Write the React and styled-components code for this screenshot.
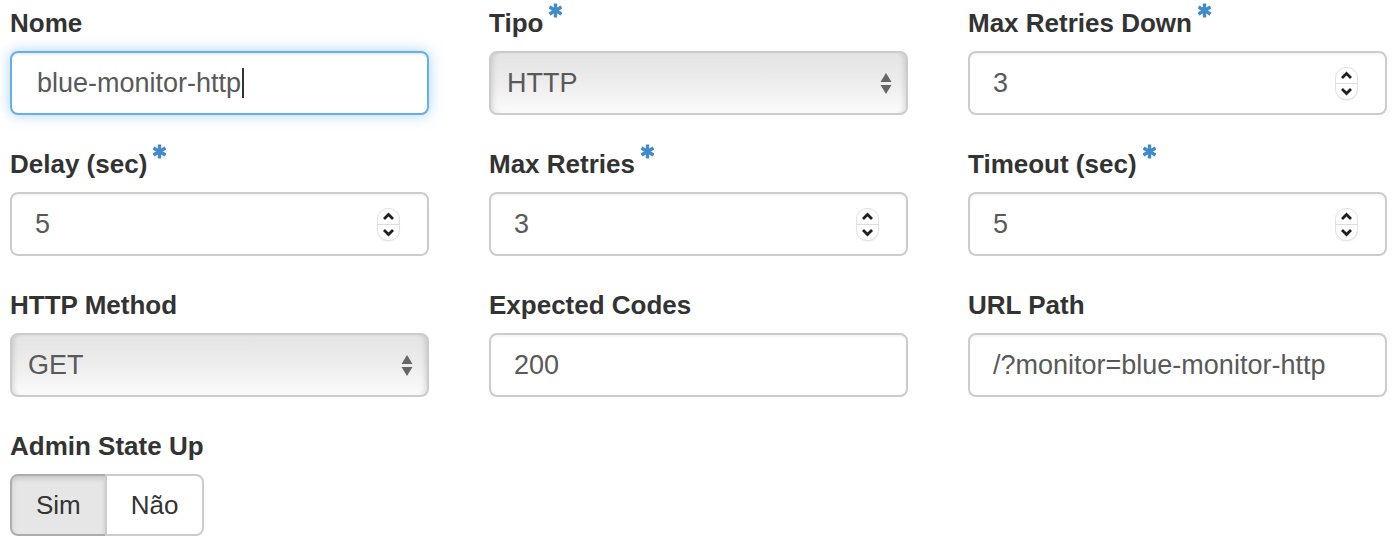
import React from 'react'
import styled, { createGlobalStyle } from 'styled-components'

const GlobalStyle = createGlobalStyle`
  body {
    margin: 0;
    background: #fff;
    font-family: "Liberation Sans", Arial, sans-serif;
  }
`

const Form = styled.div`
  display: grid;
  grid-template-columns: repeat(3, 419px);
  column-gap: 60px;
  row-gap: 31px;
  padding: 5px 6px 0 10px;
`

const Group = styled.div`
  display: flex;
  flex-direction: column;
`

const Label = styled.label`
  display: flex;
  align-items: flex-start;
  height: 36px;
  line-height: 36px;
  margin-bottom: 10px;
  font-size: 26px;
  font-weight: bold;
  color: #333;
`

const Required = styled.svg`
  width: 13px;
  height: 15px;
  margin: -2px 0 0 6px;
`

const Field = styled.div`
  box-sizing: border-box;
  height: 64px;
  display: flex;
  align-items: center;
  justify-content: space-between;
  padding: 0 27px 0 ${p => (p.$focus ? 25 : 23)}px;
  border: 2px solid ${p => (p.$focus ? '#66afe9' : '#ccc')};
  border-radius: 8px;
  background: #fff;
  font-size: 27px;
  color: #595959;
  box-shadow: ${p =>
    p.$focus
      ? 'inset 0 2px 2px rgba(0,0,0,.075), 0 0 14px rgba(102,175,233,.55)'
      : 'inset 0 2px 2px rgba(0,0,0,.04)'};
`

const Value = styled.span`
  display: flex;
  align-items: center;
  white-space: nowrap;
`

const Caret = styled.span`
  width: 2px;
  height: 30px;
  margin-left: 1px;
  background: #333;
`

const Select = styled(Field)`
  padding: 0 14px 0 16px;
  background: linear-gradient(to bottom, #e4e4e4 0%, #ececec 45%, #fbfbfb 100%);
  box-shadow:
    inset 5px 0 5px -3px rgba(0, 0, 0, 0.12),
    inset -5px 0 5px -3px rgba(0, 0, 0, 0.12),
    inset 0 -3px 3px -2px rgba(255, 255, 255, 0.9);
`

const Arrows = styled.svg`
  width: 12px;
  height: 24px;
`

const Spinner = styled.span`
  box-sizing: border-box;
  width: 23px;
  height: 33px;
  display: flex;
  flex-direction: column;
  border: 1px solid #e2e2e2;
  border-radius: 11px;
  background: #fff;
  box-shadow: 0 1px 1px rgba(0, 0, 0, 0.05);
`

const SpinHalf = styled.span`
  flex: 1;
  display: flex;
  align-items: center;
  justify-content: center;
  & + & {
    border-top: 1px solid #ddd;
  }
`

const ButtonGroup = styled.div`
  display: flex;
`

const ToggleButton = styled.button`
  box-sizing: border-box;
  height: 62px;
  padding: 0 24px;
  font-family: inherit;
  font-size: 26px;
  color: #333;
  border: 2px solid ${p => (p.$active ? '#adadad' : '#ccc')};
  background: ${p => (p.$active ? '#e6e6e6' : '#fff')};
  box-shadow: ${p => (p.$active ? 'inset 0 3px 5px rgba(0,0,0,.125)' : 'none')};
  &:first-child {
    border-radius: 8px 0 0 8px;
  }
  &:last-child {
    border-radius: 0 8px 8px 0;
    margin-left: -2px;
  }
`

const Asterisk = () => (
  <Required viewBox="0 0 13 15">
    <g stroke="#428bca" strokeWidth="3.4" strokeLinecap="butt">
      <line x1="6.5" y1="0.5" x2="6.5" y2="14.5" />
      <line x1="0.5" y1="4" x2="12.5" y2="11" />
      <line x1="0.5" y1="11" x2="12.5" y2="4" />
    </g>
  </Required>
)

const Chevron = ({ up }) => (
  <svg width="13" height="9" viewBox="0 0 13 9">
    <polyline
      points={up ? '2,7 6.5,2.5 11,7' : '2,2 6.5,6.5 11,2'}
      fill="none"
      stroke="#1f1f1f"
      strokeWidth="2.8"
    />
  </svg>
)

const FieldLabel = ({ children, required }) => (
  <Label>
    {children}
    {required && <Asterisk />}
  </Label>
)

const TextField = ({ label, value, required, focus }) => (
  <Group>
    <FieldLabel required={required}>{label}</FieldLabel>
    <Field $focus={focus}>
      <Value>
        {value}
        {focus && <Caret />}
      </Value>
    </Field>
  </Group>
)

const NumberField = ({ label, value, required }) => (
  <Group>
    <FieldLabel required={required}>{label}</FieldLabel>
    <Field>
      <Value>{value}</Value>
      <Spinner>
        <SpinHalf><Chevron up /></SpinHalf>
        <SpinHalf><Chevron /></SpinHalf>
      </Spinner>
    </Field>
  </Group>
)

const SelectField = ({ label, value, required }) => (
  <Group>
    <FieldLabel required={required}>{label}</FieldLabel>
    <Select>
      <Value>{value}</Value>
      <Arrows viewBox="0 0 12 24">
        <polygon points="6,2 11.5,11 0.5,11" fill="#666" />
        <polygon points="0.5,14 11.5,14 6,23" fill="#666" />
      </Arrows>
    </Select>
  </Group>
)

export default function App() {
  return (
    <>
      <GlobalStyle />
      <Form>
        <TextField label="Nome" value="blue-monitor-http" focus />
        <SelectField label="Tipo" value="HTTP" required />
        <NumberField label="Max Retries Down" value="3" required />

        <NumberField label="Delay (sec)" value="5" required />
        <NumberField label="Max Retries" value="3" required />
        <NumberField label="Timeout (sec)" value="5" required />

        <SelectField label="HTTP Method" value="GET" />
        <TextField label="Expected Codes" value="200" />
        <TextField label="URL Path" value="/?monitor=blue-monitor-http" />

        <Group>
          <FieldLabel>Admin State Up</FieldLabel>
          <ButtonGroup>
            <ToggleButton $active>Sim</ToggleButton>
            <ToggleButton>Não</ToggleButton>
          </ButtonGroup>
        </Group>
      </Form>
    </>
  )
}
